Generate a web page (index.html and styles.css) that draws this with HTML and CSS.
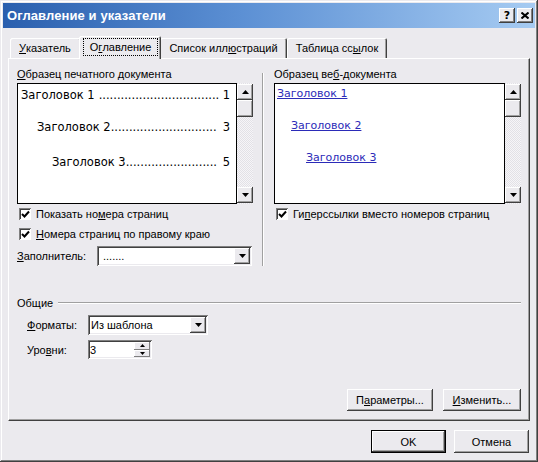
FILE: index.html
```html
<!DOCTYPE html>
<html lang="ru">
<head>
<meta charset="utf-8">
<title>Оглавление и указатели</title>
<link rel="stylesheet" href="styles.css">
</head>
<body>
<div class="window">
  <div class="titlebar">
    <span class="title">Оглавление и указатели</span>
    <div class="tbtns">
      <span class="tbtn help">?</span>
      <span class="tbtn"><svg width="8" height="7" viewBox="0 0 8 7"><path d="M0.5 0.5 L7.5 6.5 M7.5 0.5 L0.5 6.5" stroke="#000" stroke-width="2"/></svg></span>
    </div>
  </div>
  <div class="content">
    <div class="tabs">
      <div class="tab"><u>У</u>казатель</div>
      <div class="tab active"><span class="focus">О<u>г</u>лавление</span></div>
      <div class="tab">Список илл<u>ю</u>страций</div>
      <div class="tab">Таблица сс<u>ы</u>лок</div>
    </div>
    <div class="panel">
      <div class="cols">
        <div class="col col-left">
          <div class="label"><u>О</u>бразец печатного документа</div>
          <div class="preview">
            <div class="listbox print">
              <div class="toc h1"><span>Заголовок 1</span><span class="dots sp">.................................</span><span class="num">1</span></div>
              <div class="toc h2"><span>Заголовок 2</span><span class="dots">.............................</span><span class="num">3</span></div>
              <div class="toc h3"><span>Заголовок 3</span><span class="dots">.........................</span><span class="num">5</span></div>
            </div>
            <div class="scrollbar">
              <div class="sbtn"><svg width="7" height="4" viewBox="0 0 7 4"><path d="M3.5 0 L7 4 L0 4 Z" fill="#000"/></svg></div>
              <div class="thumb"></div>
              <div class="track"></div>
              <div class="sbtn"><svg width="7" height="4" viewBox="0 0 7 4"><path d="M0 0 L7 0 L3.5 4 Z" fill="#000"/></svg></div>
            </div>
          </div>
          <div class="check"><span class="box"><svg width="9" height="9" viewBox="0 0 9 9"><path d="M1 4 L3.5 6.5 L8 1.5" stroke="#000" stroke-width="2" fill="none"/></svg></span><span>Показать но<u>м</u>ера страниц</span></div>
          <div class="check"><span class="box"><svg width="9" height="9" viewBox="0 0 9 9"><path d="M1 4 L3.5 6.5 L8 1.5" stroke="#000" stroke-width="2" fill="none"/></svg></span><span><u>Н</u>омера страниц по правому краю</span></div>
          <div class="field-row">
            <span class="flabel wide"><u>З</u>аполнитель:</span>
            <div class="combo filler">
              <span class="cval">.......</span>
              <span class="cbtn"><svg width="7" height="4" viewBox="0 0 7 4"><path d="M0 0 L7 0 L3.5 4 Z" fill="#000"/></svg></span>
            </div>
          </div>
        </div>
        <div class="vsep"></div>
        <div class="col col-right">
          <div class="label">Образец ве<u>б</u>-документа</div>
          <div class="preview">
            <div class="listbox web">
              <div class="link l1">Заголовок 1</div>
              <div class="link l2">Заголовок 2</div>
              <div class="link l3">Заголовок 3</div>
            </div>
            <div class="scrollbar">
              <div class="sbtn"><svg width="7" height="4" viewBox="0 0 7 4"><path d="M3.5 0 L7 4 L0 4 Z" fill="#000"/></svg></div>
              <div class="thumb"></div>
              <div class="track"></div>
              <div class="sbtn"><svg width="7" height="4" viewBox="0 0 7 4"><path d="M0 0 L7 0 L3.5 4 Z" fill="#000"/></svg></div>
            </div>
          </div>
          <div class="check"><span class="box"><svg width="9" height="9" viewBox="0 0 9 9"><path d="M1 4 L3.5 6.5 L8 1.5" stroke="#000" stroke-width="2" fill="none"/></svg></span><span>Ги<u>п</u>ерссылки вместо номеров страниц</span></div>
        </div>
      </div>
      <div class="group-head"><span>Общие</span><span class="hline"></span></div>
      <div class="group-body">
        <div class="field-row r1">
          <span class="flabel"><u>Ф</u>орматы:</span>
          <div class="combo formats">
            <span class="cval">Из шаблона</span>
            <span class="cbtn"><svg width="7" height="4" viewBox="0 0 7 4"><path d="M0 0 L7 0 L3.5 4 Z" fill="#000"/></svg></span>
          </div>
        </div>
        <div class="field-row r2">
          <span class="flabel">Уро<u>в</u>ни:</span>
          <div class="spin">
            <span class="cval">3</span>
            <span class="spbtns">
              <span class="spb"><svg width="5" height="3" viewBox="0 0 5 3"><path d="M2.5 0 L5 3 L0 3 Z" fill="#000"/></svg></span>
              <span class="spb"><svg width="5" height="3" viewBox="0 0 5 3"><path d="M0 0 L5 0 L2.5 3 Z" fill="#000"/></svg></span>
            </span>
          </div>
        </div>
      </div>
      <div class="panel-btns">
        <button class="btn params">П<u>а</u>раметры...</button>
        <button class="btn change"><u>И</u>зменить...</button>
      </div>
    </div>
    <div class="footer">
      <button class="btn dlg default">OK</button>
      <button class="btn dlg">Отмена</button>
    </div>
  </div>
</div>
</body>
</html>
```

FILE: styles.css
```css
* { box-sizing: border-box; }
html, body { margin: 0; padding: 0; }
body {
  font-family: "Liberation Sans", Arial, sans-serif;
  font-size: 11px;
  color: #000;
  background: #ebeaee;
}
u { text-decoration: underline; text-underline-offset: 1px; }

.window {
  width: 538px;
  height: 462px;
  padding: 3px;
  background: #ebeaee;
  box-shadow: inset -1px -1px #404040, inset 1px 1px #ebeaee, inset -2px -2px #808080, inset 2px 2px #ffffff;
  display: flex;
  flex-direction: column;
}

.titlebar {
  height: 25px;
  background: linear-gradient(90deg, #2a5fae 0%, #5c90d4 45%, #a6cbf2 100%);
  display: flex;
  align-items: center;
  justify-content: space-between;
  padding: 0 2px 0 4px;
}
.title {
  color: #fff;
  font-weight: bold;
  font-size: 13px;
  letter-spacing: 0.1px;
}
.tbtns { display: flex; gap: 2px; }
.tbtn {
  width: 16px;
  height: 15px;
  background: #ebeaee;
  box-shadow: inset -1px -1px #404040, inset 1px 1px #ffffff, inset -2px -2px #808080;
  display: flex;
  align-items: center;
  justify-content: center;
  font-weight: bold;
  font-size: 12px;
  line-height: 1;
}
.help { font-family: "DejaVu Sans", sans-serif; font-size: 11px; }

.content {
  flex: 1;
  display: flex;
  flex-direction: column;
  padding: 0 5px;
}

.tabs {
  display: flex;
  align-items: flex-end;
  margin-top: 8px;
  margin-bottom: -1px;
  padding-left: 2px;
  height: 23px;
}
.tab {
  height: 20px;
  margin-bottom: 1px;
  padding: 0 9px;
  display: flex;
  align-items: center;
  background: #ebeaee;
  border-radius: 2px 2px 0 0;
  box-shadow: inset 1px 1px #ffffff, inset -1px 0 #404040, inset -2px 0 #a0a0a0;
  white-space: nowrap;
}
.tab:first-child { padding: 0 10px 0 9px; }
.tab.active {
  position: relative;
  z-index: 2;
  height: 23px;
  margin: 0 -1px 0 -2px;
  padding: 0 3px 2px 4px;
}
.focus {
  border: 1px dotted #000;
  padding: 1px 6px 1px 6px;
  height: 18px;
  display: flex;
  align-items: center;
}

.panel {
  position: relative;
  z-index: 1;
  height: 363px;
  border: 1px solid;
  border-color: #ffffff #404040 #404040 #ffffff;
  box-shadow: inset -1px -1px #a0a0a0;
  padding: 0 8px 9px 8px;
  display: flex;
  flex-direction: column;
}

.cols {
  display: flex;
  padding-top: 9px;
  padding-bottom: 27px;
}
.col-left { width: 236px; }
.col-right { width: 247px; }
.vsep {
  width: 2px;
  margin: 5px 10px 0 9px;
  border-left: 1px solid #a0a0a0;
  border-right: 1px solid #ffffff;
}
.label { height: 13px; line-height: 13px; white-space: nowrap; }

.preview {
  display: flex;
  height: 121px;
  margin-top: 2px;
}
.listbox {
  flex: 1;
  background: #fff;
  border: 1px solid #000;
  overflow: hidden;
}
.scrollbar {
  width: 16px;
  display: flex;
  flex-direction: column;
  padding: 1px 0;
  background: repeating-conic-gradient(#f6f5f8 0 25%, #e2e1e6 0 50%) 0 0 / 2px 2px;
}
.sbtn, .thumb {
  height: 16px;
  background: #ebeaee;
  box-shadow: inset -1px -1px #404040, inset 1px 1px #ffffff, inset -2px -2px #a0a0a0;
  display: flex;
  align-items: center;
  justify-content: center;
}
.thumb { height: 17px; }
.track { flex: 1; }

.print {
  font-family: "DejaVu Sans", sans-serif;
  font-size: 11.5px;
  padding: 3px 6px 0 2px;
}
.toc {
  display: flex;
  white-space: nowrap;
  height: 16px;
  line-height: 16px;
}
.toc .dots { letter-spacing: 0; }
.toc .dots.sp { margin-left: 4px; }
.toc .num { margin-left: auto; }
.h1 { padding-left: 1px; }
.h2 { padding-left: 17px; margin-top: 16px; }
.h3 { padding-left: 32px; margin-top: 19px; }

.web {
  font-family: "DejaVu Sans", sans-serif;
  font-size: 11px;
  padding: 2px 2px 0 2px;
}
.link {
  color: #2b2bb8;
  text-decoration: underline;
  height: 16px;
  line-height: 16px;
  white-space: nowrap;
}
.l2 { padding-left: 14px; margin-top: 16px; }
.l3 { padding-left: 29px; margin-top: 16px; }

.check {
  height: 20px;
  display: flex;
  align-items: center;
  gap: 5px;
  padding-left: 2px;
  white-space: nowrap;
}
.box {
  width: 12px;
  height: 12px;
  background: #fff;
  box-shadow: inset 1px 1px #808080, inset -1px -1px #ffffff, inset 2px 2px #404040;
  display: flex;
  align-items: center;
  justify-content: center;
  padding: 1px 0 0 1px;
}

.field-row {
  display: flex;
  align-items: center;
  margin-top: 2px;
}
.flabel { width: 61px; white-space: nowrap; }
.flabel.wide { width: 80px; }
.combo, .spin {
  height: 20px;
  background: #fff;
  box-shadow: inset 1px 1px #808080, inset -1px -1px #ffffff, inset 2px 2px #404040, inset -2px -2px #ebeaee;
  display: flex;
  align-items: center;
  padding: 2px;
}
.filler { width: 155px; }
.cval { flex: 1; padding-left: 3px; white-space: nowrap; }
.filler .cval { padding-left: 4px; }
.cbtn {
  width: 16px;
  height: 16px;
  background: #ebeaee;
  box-shadow: inset -1px -1px #404040, inset 1px 1px #ffffff, inset -2px -2px #a0a0a0;
  display: flex;
  align-items: center;
  justify-content: center;
}

.group-head {
  display: flex;
  align-items: center;
  height: 13px;
  margin-top: 3px;
}
.hline {
  flex: 1;
  height: 2px;
  margin-left: 5px;
  border-top: 1px solid #a0a0a0;
  border-bottom: 1px solid #ffffff;
}
.group-body { padding-left: 10px; }
.group-body .r1 { margin-top: 6px; }
.group-body .r2 { margin-top: 5px; }
.formats { width: 120px; }
.formats .cval { padding-left: 1px; }
.spin { width: 64px; height: 19px; }
.spin .cval { padding-left: 0; }
.spbtns { display: flex; flex-direction: column; width: 16px; height: 15px; }
.spb {
  flex: 1;
  background: #ebeaee;
  box-shadow: inset -1px -1px #808080, inset 1px 1px #ffffff;
  display: flex;
  align-items: center;
  justify-content: center;
}

.btn {
  font-family: "Liberation Sans", Arial, sans-serif;
  font-size: 11px;
  color: #000;
  background: #ebeaee;
  border: none;
  padding: 0;
  box-shadow: inset -1px -1px #404040, inset 1px 1px #ffffff, inset -2px -2px #a0a0a0;
}
.panel-btns {
  margin-top: auto;
  display: flex;
  justify-content: flex-end;
  gap: 10px;
}
.params { width: 86px; height: 22px; }
.change { width: 78px; height: 22px; }

.footer {
  margin-top: 9px;
  display: flex;
  justify-content: flex-end;
  gap: 8px;
  padding-right: 1px;
}
.dlg { width: 75px; height: 23px; }
.default {
  box-shadow: inset 0 0 0 1px #000, inset -2px -2px #404040, inset 2px 2px #ffffff, inset -3px -3px #a0a0a0;
}
```
